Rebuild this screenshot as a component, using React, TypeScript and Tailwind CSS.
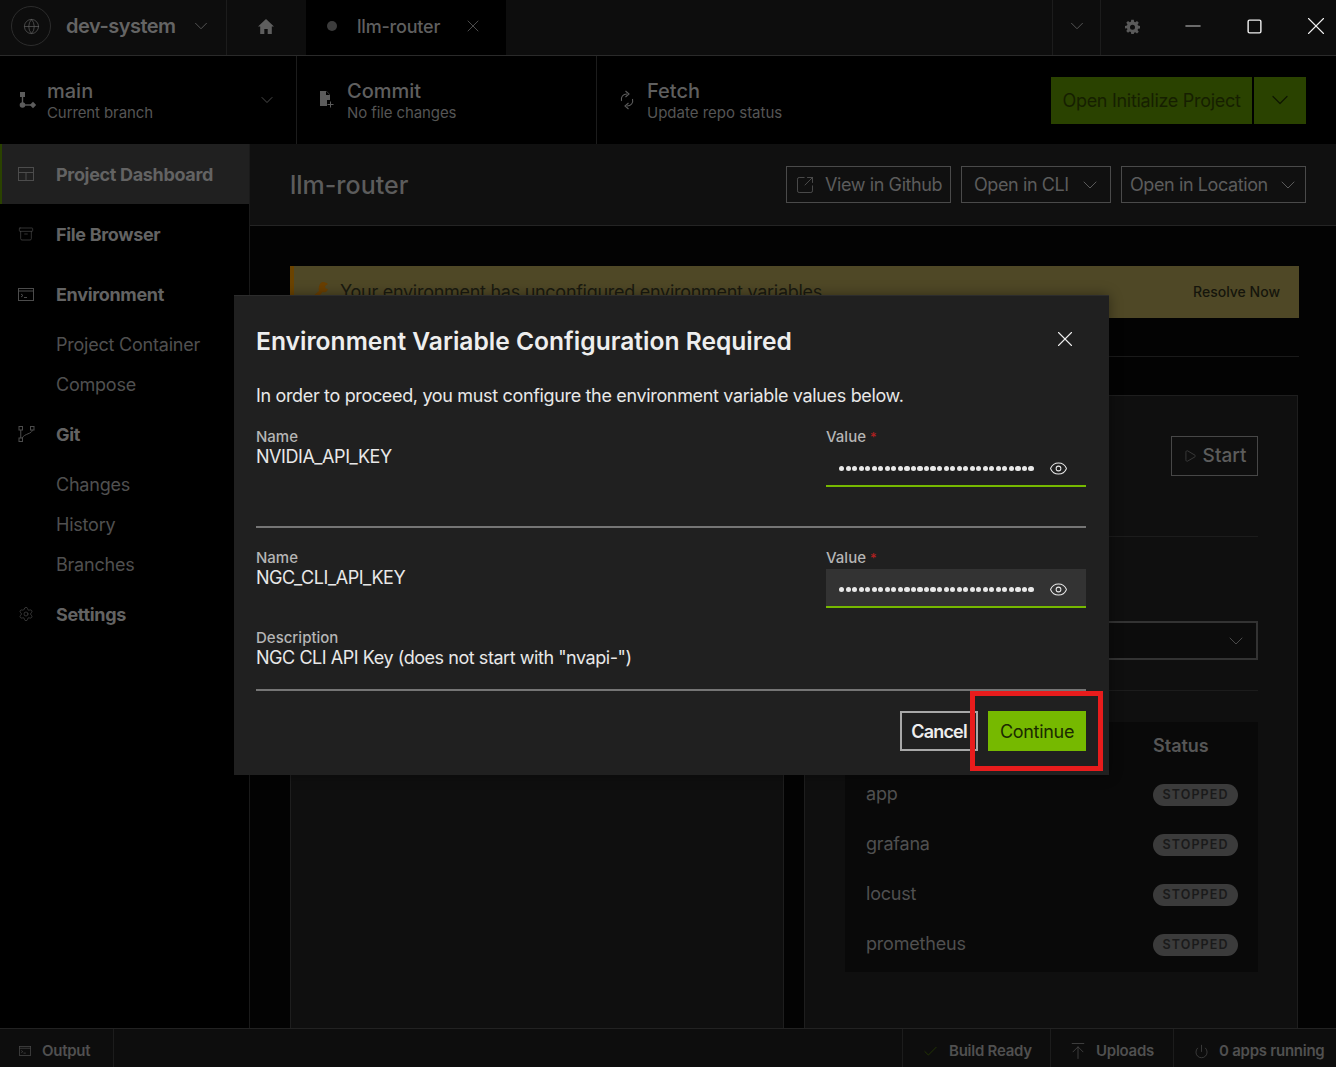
import {
  Archive,
  ArrowUpToLine,
  Check,
  ChevronDown,
  Eye,
  Globe,
  Minus,
  Play,
  Power,
  Settings,
  Square,
  SquareArrowOutUpRight,
  X,
} from "lucide-react";
import type { ReactNode } from "react";

const FONT = "font-['Inter','Noto_Sans',sans-serif]";

function BranchIcon() {
  return (
    <svg width="18" height="18" viewBox="0 0 18 18" fill="#5c5c5c">
      <rect x="1" y="1" width="5" height="5" />
      <rect x="2.8" y="5" width="1.4" height="8" />
      <circle cx="3.5" cy="14" r="2.8" />
      <rect x="5" y="13.3" width="8" height="1.4" />
      <path d="M14 10.8 17.2 14 14 17.2 10.8 14z" />
    </svg>
  );
}

function CommitIcon() {
  return (
    <svg width="16" height="18" viewBox="0 0 16 18" fill="none">
      <path d="M1 0h6.500L11 3.500V9H8v6H1z" fill="#5c5c5c" />
      <path d="M7 4V0l4 4z" fill="#000" />
      <path d="M11.500 10.500v6M8.500 13.500h6" stroke="#5c5c5c" />
    </svg>
  );
}

function FetchIcon() {
  return (
    <svg width="14" height="20" viewBox="0 0 14 20" fill="none" stroke="#5c5c5c" strokeWidth="1.1">
      <path d="M1.500 11c-1-4 1.500-7 5.500-7" />
      <path d="M5.500 1 9 4 5.500 7" />
      <path d="M12.500 9c1 4-1.500 7-5.500 7" />
      <path d="M8.500 13 5 16l3.500 3" />
    </svg>
  );
}

function DashboardIcon() {
  return (
    <svg width="16" height="14" viewBox="0 0 16 14" fill="none" stroke="#4c4c4c">
      <rect x="0.5" y="0.5" width="15" height="13" />
      <path d="M0.5 5.500h15M8 5.500v8" />
    </svg>
  );
}

function TerminalIcon({ stroke = "#4c4c4c", size = 16 }: { stroke?: string; size?: number }) {
  return (
    <svg width={size} height={(size * 13) / 16} viewBox="0 0 16 13" fill="none" stroke={stroke}>
      <rect x="0.5" y="0.5" width="15" height="12" />
      <path d="M0.5 3h15M3 6l2 1.500L3 9M6 9.500h3" />
    </svg>
  );
}

function GitIcon() {
  return (
    <svg width="17" height="16" viewBox="0 0 17 16" fill="none" stroke="#4c4c4c">
      <rect x="1" y="0.5" width="3.500" height="3.500" />
      <rect x="1" y="12" width="3.500" height="3.500" />
      <rect x="12.500" y="0.5" width="3.500" height="3.500" />
      <path d="M2.750 4v8M14.250 4c0 4-8 3.500-10 8" />
    </svg>
  );
}

function HomeIcon() {
  return (
    <svg width="16" height="15" viewBox="0 0 16 15" fill="#5e5e5e">
      <path d="M8 0 16 7.500h-2.200V15H9.700v-5H6.300v5H2.200V7.500H0z" />
    </svg>
  );
}

function GearIcon() {
  return (
    <svg width="15" height="15" viewBox="0 0 24 24" fill="#5a5a5a">
      <path
        fillRule="evenodd"
        d="M10 1h4l.6 3.200 1.900.8 2.700-1.900 2.800 2.800-1.900 2.700.8 1.900L24 11v4l-3.100.6-.8 1.900 1.900 2.700-2.800 2.800-2.700-1.900-1.900.8L14 24h-4l-.6-3.100-1.900-.8-2.700 1.900-2.800-2.800 1.900-2.700-.8-1.900L0 15v-4l3.100-.6.800-1.900L2 5.900l2.800-2.800 2.700 1.900 1.900-.8zM12 9a4 4 0 1 0 0 8 4 4 0 0 0 0-8z"
      />
    </svg>
  );
}

function WrenchIcon() {
  return (
    <svg width="16" height="18" viewBox="0 0 16 18" fill="#6a3f00">
      <path d="M11 0c2 0 4 1 5 2l-3 2 .5 2.500L16 7c-.5 2.500-3 4-5.500 3L4 18H0v-3l7-6C6 5 8 0 11 0z" />
    </svg>
  );
}

function ToolbarItem({
  icon,
  title,
  subtitle,
  className,
  children,
}: {
  icon: ReactNode;
  title: string;
  subtitle: string;
  className: string;
  children?: ReactNode;
}) {
  return (
    <div className={`flex items-center border-r border-[#1c1c1c] ${className}`}>
      <div className="w-[28px] flex justify-start">{icon}</div>
      <div className="flex-1 pt-[2px]">
        <div className="text-[20px] leading-[24px] font-medium text-[#5f5f5f]">{title}</div>
        <div className="text-[15px] leading-[20px] tracking-[-0.1px] text-[#555555]">{subtitle}</div>
      </div>
      {children}
    </div>
  );
}

function OutlineButton({ children, className }: { children: ReactNode; className: string }) {
  return (
    <div
      className={`h-[37px] flex items-center border border-[#4a4a4a] text-[18px] tracking-[-0.4px] text-[#5c5c5c] ${className}`}
    >
      {children}
    </div>
  );
}

function NavHead({ icon, label, active }: { icon: ReactNode; label: string; active?: boolean }) {
  return (
    <div
      className={`h-[60px] flex items-center ${
        active ? "bg-[#202020] border-l-2 border-[#2a4200] pl-[16px]" : "pl-[18px]"
      }`}
    >
      <div className="w-[38px]">{icon}</div>
      <span className="text-[18px] font-bold tracking-[-0.33px] text-[#636363]">{label}</span>
    </div>
  );
}

function NavSub({ label }: { label: string }) {
  return (
    <div className="h-[40px] flex items-center pl-[56px] text-[18px] tracking-[-0.22px] text-[#505050]">
      {label}
    </div>
  );
}

function EnvField({
  name,
  description,
  hovered,
}: {
  name: string;
  description?: string;
  hovered?: boolean;
}) {
  return (
    <div className="flex justify-between">
      <div>
        <div className="text-[15px] leading-[18px] font-medium text-[#b5b5b5]">Name</div>
        <div className="text-[18px] leading-[22px] tracking-[-0.45px] text-[#e8e8e8]">{name}</div>
        {description && (
          <div className="mt-[40px]">
            <div className="text-[15px] leading-[18px] font-medium text-[#b5b5b5]">Description</div>
            <div className="text-[18px] leading-[22px] tracking-[-0.45px] text-[#e8e8e8]">{description}</div>
          </div>
        )}
      </div>
      <div className="w-[260px]">
        <div className="text-[15px] leading-[18px] font-medium text-[#b5b5b5]">
          Value <span className="text-[#b02020] text-[13px] align-top">*</span>
        </div>
        <div
          className={`mt-[2px] h-[39px] pt-[4px] flex items-center pl-[13px] border-b-2 border-[#76b900] ${
            hovered ? "bg-[#333333]" : ""
          }`}
        >
          <div className="w-[196px] overflow-hidden flex gap-[1.35px]">
            {Array.from({ length: 30 }).map((_, i) => (
              <span key={i} className="w-[5.2px] h-[5.2px] shrink-0 rounded-full bg-[#e8e8e8]" />
            ))}
          </div>
          <Eye className="ml-[14px]" size={19} strokeWidth={1.3} color="#e8e8e8" />
        </div>
      </div>
    </div>
  );
}

export default function App() {
  return (
    <div className={`relative h-[1067px] w-[1336px] overflow-hidden bg-black flex flex-col ${FONT}`}>
      {/* title bar */}
      <div className="h-[56px] shrink-0 flex bg-[#0d0d0d] border-b border-[#2a2a2a]">
        <div className="w-[227px] flex items-center pl-[11px] pb-[3px] border-r border-[#1c1c1c]">
          <div className="w-[40px] h-[40px] rounded-full border border-[#2c2c2c] flex items-center justify-center">
            <Globe size={17} strokeWidth={1} color="#5e5e5e" />
          </div>
          <span className="ml-[15px] text-[20px] font-semibold tracking-[-0.5px] text-[#646464]">dev-system</span>
          <ChevronDown className="ml-[14px]" size={22} strokeWidth={1} color="#5a5a5a" />
        </div>
        <div className="w-[79px] flex items-center justify-center pb-[3px] pr-[2px]">
          <HomeIcon />
        </div>
        <div className="w-[200px] flex items-center bg-black pl-[21px] pb-[3px]">
          <span className="w-[10px] h-[10px] rounded-full bg-[#3c3c3c]" />
          <span className="ml-[20px] text-[18px] font-medium tracking-[-0.2px] text-[#5f5f5f]">llm-router</span>
          <X className="ml-[23px]" size={20} strokeWidth={1} color="#5a5a5a" />
        </div>
        <div className="flex-1" />
        <div className="w-[49px] flex items-center justify-center pb-[3px] border-x border-[#1c1c1c]">
          <ChevronDown size={22} strokeWidth={1} color="#5a5a5a" />
        </div>
        <div className="w-[62px] flex items-center justify-center pb-[3px]">
          <GearIcon />
        </div>
        <div className="w-[60px] flex items-center justify-center pb-[3px]">
          <Minus size={24} strokeWidth={1.6} color="#8a8a8a" />
        </div>
        <div className="w-[62px] flex items-center justify-center pb-[3px]">
          <Square size={17} strokeWidth={2} color="#f0f0f0" />
        </div>
        <div className="w-[51px] flex items-center justify-center pb-[3px] pl-[10px]">
          <X size={30} strokeWidth={0.9} color="#f0f0f0" />
        </div>
      </div>

      {/* git toolbar */}
      <div className="h-[88px] shrink-0 flex items-center">
        <ToolbarItem
          className="h-full w-[297px] pl-[19px] pr-[19px]"
          icon={<BranchIcon />}
          title="main"
          subtitle="Current branch"
        >
          <ChevronDown size={20} strokeWidth={1} color="#5a5a5a" />
        </ToolbarItem>
        <ToolbarItem
          className="h-full w-[300px] pl-[22px]"
          icon={<CommitIcon />}
          title="Commit"
          subtitle="No file changes"
        />
        <div className="h-full flex-1 flex items-center pl-[23px]">
          <div className="w-[27px]">
            <FetchIcon />
          </div>
          <div className="pt-[2px]">
            <div className="text-[20px] leading-[24px] font-medium text-[#5f5f5f]">Fetch</div>
            <div className="text-[15px] leading-[20px] text-[#555555]">Update repo status</div>
          </div>
        </div>
        <div className="flex mr-[30px] gap-[2px]">
          <div className="w-[201px] h-[47px] flex items-center justify-center bg-[#2a4200] text-[18px] tracking-[-0.3px] text-[#161f00]">
            Open Initialize Project
          </div>
          <div className="w-[52px] h-[47px] flex items-center justify-center bg-[#2a4200]">
            <ChevronDown size={28} strokeWidth={1.1} color="#0f1700" />
          </div>
        </div>
      </div>

      <div className="flex-1 flex min-h-0">
        {/* sidebar */}
        <div className="w-[250px] shrink-0 border-r border-[#1a1a1a]">
          <NavHead icon={<DashboardIcon />} label="Project Dashboard" active />
          <NavHead icon={<Archive size={16} strokeWidth={1} color="#4c4c4c" />} label="File Browser" />
          <NavHead icon={<TerminalIcon />} label="Environment" />
          <NavSub label="Project Container" />
          <NavSub label="Compose" />
          <NavHead icon={<GitIcon />} label="Git" />
          <NavSub label="Changes" />
          <NavSub label="History" />
          <NavSub label="Branches" />
          <NavHead icon={<Settings size={16} strokeWidth={1} color="#4c4c4c" />} label="Settings" />
        </div>

        {/* project page, dimmed by the dialog */}
        <div className="flex-1 flex flex-col min-w-0 bg-[#030303]">
          <div className="h-[82px] shrink-0 flex items-center justify-between pl-[40px] pr-[30px] bg-[#101010] border-b border-[#242424]">
            <span className="pt-[3px] text-[25px] font-medium text-[#5c5c5c]">llm-router</span>
            <div className="flex gap-[10px]">
              <OutlineButton className="w-[165px] pl-[8px]">
                <SquareArrowOutUpRight size={20} strokeWidth={1} color="#555555" />
                <span className="ml-[10px]">View in Github</span>
              </OutlineButton>
              <OutlineButton className="w-[150px] pl-[12px]">
                <span>Open in CLI</span>
                <ChevronDown className="ml-[9px]" size={24} strokeWidth={1} color="#5a5a5a" />
              </OutlineButton>
              <OutlineButton className="w-[185px] pl-[8px]">
                <span>Open in Location</span>
                <ChevronDown className="ml-[8px]" size={24} strokeWidth={1} color="#5a5a5a" />
              </OutlineButton>
            </div>
          </div>

          <div className="flex-1 flex flex-col min-h-0 pl-[40px] pr-[37px] pt-[40px]">
            <div className="h-[52px] shrink-0 flex items-center justify-between bg-[#4f4826] border-l-4 border-[#6b4300] pl-[18px] pr-[19px] pb-[2px]">
              <div className="flex items-center gap-[12px]">
                <WrenchIcon />
                <span className="text-[18px] tracking-[-0.28px] text-[#1a1a10]">
                  Your environment has unconfigured environment variables.
                </span>
              </div>
              <span className="text-[14px] font-medium text-[#15150c]">Resolve Now</span>
            </div>
            <div className="mt-[38px] h-px shrink-0 bg-[#1a1a1a]" />
            <div className="mt-[38px] mr-px flex-1 grid grid-cols-2 gap-[20px]">
              <div className="bg-[#0f0f0f] border-x border-t border-[#1e1e1e]" />
              <div className="bg-[#0f0f0f] border-x border-t border-[#1e1e1e] pt-[40px] pl-[40px] pr-[39px] flex flex-col">
                <div className="flex justify-end">
                  <div className="w-[87px] h-[40px] flex items-center justify-center gap-[6px] border border-[#474747] text-[19px] font-medium text-[#5c5c5c]">
                    <Play size={14} strokeWidth={1} color="#555555" />
                    Start
                  </div>
                </div>
                <div className="mt-[60px] h-px bg-[#1c1c1c]" />
                <div className="mt-[84px] h-[39px] flex items-center justify-end pr-[8px] border-2 border-[#333333] bg-[#0c0c0c]">
                  <ChevronDown size={24} strokeWidth={1} color="#4a4a4a" />
                </div>
                <div className="mt-[30px] h-px bg-[#1c1c1c]" />
                <div className="mt-[31px] bg-[#090909] h-[250px] pl-[21px] pr-[20px]">
                  <div className="h-[47px] flex items-center justify-end">
                    <span className="w-[85px] text-[18px] font-semibold text-[#565656]">Status</span>
                  </div>
                  {["app", "grafana", "locust", "prometheus"].map((name) => (
                    <div key={name} className="h-[50px] pt-[2px] flex items-center justify-between">
                      <span className="-mt-[4px] text-[18px] tracking-[-0.2px] text-[#505050]">{name}</span>
                      <span className="w-[85px] h-[22px] flex items-center justify-center rounded-full bg-[#3b3b3b] text-[12.500px] font-semibold tracking-[1.100px] text-[#1a1a1a]">
                        STOPPED
                      </span>
                    </div>
                  ))}
                </div>
              </div>
            </div>
          </div>
        </div>
      </div>

      {/* status bar */}
      <div className="h-[39px] shrink-0 flex items-center bg-[#0d0d0d] border-t border-[#222222] text-[15px] font-semibold tracking-[-0.25px] text-[#505050]">
        <div className="h-full w-[114px] flex items-center pl-[19px] pt-[6px] gap-[11px] border-r border-[#1c1c1c]">
          <TerminalIcon stroke="#484848" size={12} />
          Output
        </div>
        <div className="flex-1" />
        <div className="h-full w-[149px] flex items-center pl-[19px] pt-[6px] gap-[10px] border-x border-[#1c1c1c]">
          <Check size={17} strokeWidth={1} color="#2a4200" />
          Build Ready
        </div>
        <div className="h-full w-[123px] flex items-center pl-[17px] pt-[6px] gap-[8px] border-r border-[#1c1c1c]">
          <ArrowUpToLine size={20} strokeWidth={0.9} color="#4c4c4c" />
          Uploads
        </div>
        <div className="h-full w-[162px] flex items-center pl-[20px] pt-[6px] gap-[10px]">
          <Power size={15} strokeWidth={1.1} color="#4c4c4c" />
          <span className="whitespace-nowrap">0 apps running</span>
        </div>
      </div>

      {/* dialog */}
      <div className="absolute left-[234px] top-[295px] w-[875px] h-[480px] bg-[#202020] border-t border-[#2c2c2c] pl-[22px] pr-[23px] shadow-[0_0_12px_rgba(0,0,0,0.4)]">
        <div className="mt-[28px] flex items-center justify-between pr-[8px]">
          <span className="text-[24.600px] leading-[34px] font-semibold text-[#eeeeee]">
            Environment Variable Configuration Required
          </span>
          <X className="-mt-[4px]" size={26} strokeWidth={1} color="#eeeeee" />
        </div>
        <p className="mt-[26px] text-[18px] leading-[24px] tracking-[-0.34px] text-[#e8e8e8]">
          In order to proceed, you must configure the environment variable values below.
        </p>
        <div className="mt-[20px] h-[100px] border-b-2 border-[#757575]">
          <EnvField name="NVIDIA_API_KEY" />
        </div>
        <div className="mt-[21px] h-[142px] border-b-2 border-[#757575]">
          <EnvField name="NGC_CLI_API_KEY" description={'NGC CLI API Key (does not start with "nvapi-")'} hovered />
        </div>
        <div className="mt-[20px] flex justify-end gap-[10px]">
          <div className="w-[78px] h-[40px] flex items-center justify-center border-2 border-[#a8a8a8] text-[18px] font-semibold tracking-[-0.8px] text-[#eeeeee]">
            Cancel
          </div>
          <div className="w-[98px] h-[40px] flex items-center justify-center bg-[#76b900] text-[18px] tracking-[-0.3px] text-[#1a2a00]">
            Continue
          </div>
        </div>

        {/* annotation around the primary action */}
        <div className="absolute left-[736px] top-[395px] w-[133px] h-[80px] border-[5px] border-[#e81c1c]" />
      </div>
    </div>
  );
}
